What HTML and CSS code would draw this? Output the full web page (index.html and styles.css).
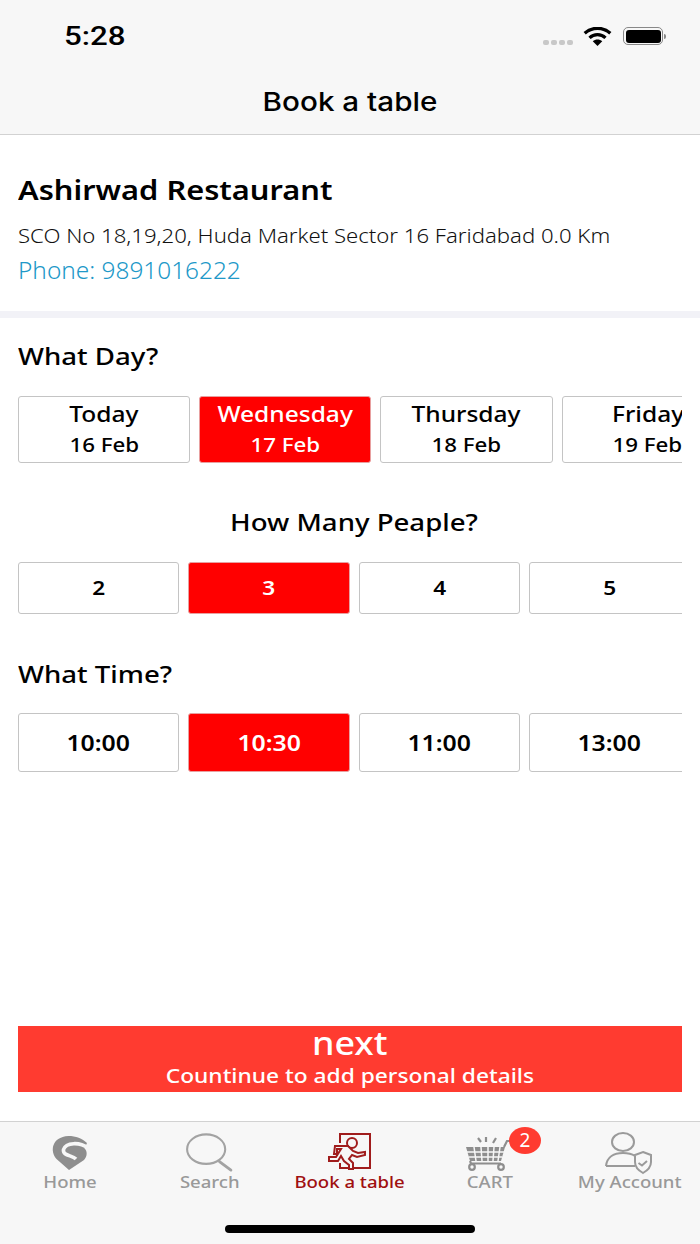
FILE: index.html
```html
<!DOCTYPE html>
<html lang="en">
<head>
<meta charset="utf-8">
<title>Book a table</title>
<link rel="stylesheet" href="styles.css">
</head>
<body>
<div class="app">
  <header class="top">
    <div class="status">
      <span class="clock">5:28</span>
      <div class="status-icons">
        <span class="dots"><i></i><i></i><i></i><i></i></span>
        <svg class="wifi" width="29" height="19" viewBox="0 0 30 20"><path d="M1.500 6.600C9-.4 21-.4 28.500 6.600" fill="none" stroke="#000" stroke-width="3.400"/><path d="M6.600 11.400c4.600-4.400 12.200-4.400 16.800 0" fill="none" stroke="#000" stroke-width="3.400"/><path d="M10 15 15 20l5-5c-2.800-2.600-7.200-2.600-10 0z" fill="#000"/></svg>
        <span class="battery"><b></b></span><span class="nub"></span>
      </div>
    </div>
    <h1 class="title">Book a table</h1>
  </header>
  <section class="info">
    <h2 class="name">Ashirwad Restaurant</h2>
    <p class="addr">SCO No 18,19,20, Huda Market Sector 16 Faridabad 0.0 Km</p>
    <p class="phone">Phone: 9891016222</p>
  </section>
  <main class="form">
    <h3 class="q q-day">What Day?</h3>
    <div class="row day-row">
      <div class="card day"><strong>Today</strong><span>16 Feb</span></div>
      <div class="card day on"><strong>Wednesday</strong><span>17 Feb</span></div>
      <div class="card day"><strong>Thursday</strong><span>18 Feb</span></div>
      <div class="card day"><strong>Friday</strong><span>19 Feb</span></div>
    </div>
    <h3 class="q q-people">How Many Peaple?</h3>
    <div class="row people-row">
      <div class="card num"><span>2</span></div>
      <div class="card num on"><span>3</span></div>
      <div class="card num"><span>4</span></div>
      <div class="card num"><span>5</span></div>
    </div>
    <h3 class="q q-time">What Time?</h3>
    <div class="row time-row">
      <div class="card time"><span>10:00</span></div>
      <div class="card time on"><span>10:30</span></div>
      <div class="card time"><span>11:00</span></div>
      <div class="card time"><span>13:00</span></div>
    </div>
    <button class="next"><span class="next-a">next</span><span class="next-b">Countinue to add personal details</span></button>
  </main>
  <nav class="tabs">
    <div class="tab">
      <svg class="ico" width="50" height="40" viewBox="0 4 50 40"><path d="M24 42 11.500 31C5 24 6 9 23.500 8c7 0 14 2.500 18.500 7l-2.500 5.500c3 2.500 3 8-.5 11.500z" fill="#8e8e8e"/><path d="M43 20C35 14 21 14 18.500 21.500 17.500 28 27 27 31 31" fill="none" stroke="#f7f7f7" stroke-width="3.600"/></svg>
      <span>Home</span>
    </div>
    <div class="tab tab-search">
      <svg class="ico" width="50" height="42" viewBox="0 0 50 42"><ellipse cx="22" cy="18" rx="20" ry="15.500" fill="none" stroke="#a3a3a3" stroke-width="2.200"/><path d="M36 31l12 9" stroke="#a3a3a3" stroke-width="3" stroke-linecap="round"/></svg>
      <span>Search</span>
    </div>
    <div class="tab active">
      <svg class="ico" width="56" height="40" viewBox="0 4 56 40" fill="none" stroke="#a01c1c" stroke-width="2"><path d="M18 15V6h30v34H18v-5"/><circle cx="30" cy="15" r="5"/><path d="M12 26 13 18H26L31 23 36 25 43 24V27L35 29 30 27 27 31 31 35V41H27V37L22 33 19 28 16 33H7V29H14L19 21H15V26Z" fill="#f7f7f7"/></svg>
      <span>Book a table</span>
    </div>
    <div class="tab tab-cart">
      <svg class="ico" width="56" height="40" viewBox="0 4 56 40" fill="none" stroke="#8e8e8e"><path d="M18 10l3 4M26 9v5M36 10l-3 5" stroke-width="2.200"/><path d="M6 19h39l-4 14H10z" fill="#8e8e8e" stroke="none"/><path d="M7 24h37M8.500 29h34M14 19l2 14M21 19l1 14M28 19v14M34 19l-1 14M40 19l-2 14" stroke="#f7f7f7" stroke-width="1.500"/><path d="M44 19l3-6h5M10 33l1 2.500h30" stroke-width="2.200"/><circle cx="12" cy="39" r="2.800" stroke-width="2.200"/><circle cx="41" cy="39" r="2.800" stroke-width="2.200"/></svg>
      <span>CART</span>
      <span class="badge">2</span>
    </div>
    <div class="tab">
      <svg class="ico" width="60" height="40" viewBox="0 4 60 40" fill="none" stroke="#9a9a9a" stroke-width="2"><ellipse cx="23" cy="14" rx="11" ry="9"/><path d="M6 38c1-9 8-13 17-13 4.500 0 9 1 12 3M6 38h29"/><path d="M43 24l8 3v7c0 5-3.500 8.500-8 11-4.500-2.500-8-6-8-11v-7z" fill="#f7f7f7"/><path d="M38.500 35l3.500 2.500 5-4.500" stroke-width="2"/></svg>
      <span>My Account</span>
    </div>
    <div class="home-bar"></div>
  </nav>
</div>
</body>
</html>
```
FILE: styles.css
```css
* { box-sizing: border-box; }
html, body { margin: 0; padding: 0; background: #fff; }
.app {
  width: 700px; height: 1244px; display: flex; flex-direction: column; overflow: hidden;
  font-family: "Noto Sans", sans-serif; color: #000;
}
.top { height: 135px; background: #f7f7f7; border-bottom: 1px solid #d2d2d2; display: flex; flex-direction: column; }
.status { height: 84px; padding: 21px 34px 0 64px; display: flex; justify-content: space-between; align-items: flex-start; }
.clock { font: 500 25px/30px Roboto, sans-serif; letter-spacing: 0; margin-top: 1px; transform: scaleX(1.25); transform-origin: left; }
.status-icons { display: flex; align-items: center; height: 30px; }
.dots { display: flex; gap: 2px; margin-top: 13px; margin-right: 10px; }
.dots i { width: 6px; height: 5px; border-radius: 2px; background: #c8c8c8; }
.wifi { margin-right: 11px; }
.battery { width: 40px; height: 18px; border: 1.500px solid #888; border-radius: 5px; padding: 1.500px; display: flex; }
.battery b { flex: 1; background: #000; border-radius: 3px; }
.nub { width: 2px; height: 5px; background: #888; margin-left: 1px; border-radius: 0 2px 2px 0; }
.title { margin: 0; text-align: center; font: 500 26px/36px Inter, sans-serif; transform: scaleX(1.14); }
.info { height: 183px; padding: 38px 18px 0; border-bottom: 7px solid #f2f2f7; }
.name, .addr, .phone, .q-day, .q-time { transform-origin: left; }
.name { margin: 0; font-weight: 600; font-size: 27px; line-height: 34px; transform: scaleX(1.14); }
.addr { margin: 16px 0 0; font-weight: 300; font-size: 20px; line-height: 26px; color: #111; transform: scaleX(1.106); }
.phone { margin: 6px 0 0; font-weight: 300; font-size: 23px; line-height: 30px; color: #2098c8; transform: scaleX(1.06); }
.form { flex: 1; padding: 0 18px; display: flex; flex-direction: column; }
.q { margin: 0; font-weight: 550; font-size: 24px; line-height: 32px; transform: scaleX(1.15); }
.q-day { margin-top: 22px; }
.q-people { margin-top: 43px; text-align: center; padding-left: 7px; }
.q-time { margin-top: 44px; }
.row { display: flex; gap: 9px; overflow: hidden; }
.day-row { margin-top: 24px; }
.people-row { margin-top: 24px; }
.time-row { margin-top: 23px; }
.card {
  flex: none; background: #fff; border: 1px solid #c4c4c4; border-radius: 3px; padding-bottom: 2px;
  display: flex; align-items: center; justify-content: center; font-weight: 600;
}
.card.on { background: #f00; color: #fff; border-color: #e8a0a0; }
.day { width: 172.200px; height: 67px; flex-direction: column; }
.day strong { font-weight: 500; font-size: 22.500px; line-height: 30px; transform: scaleX(1.09); }
.day span { font-weight: 500; font-size: 20px; line-height: 28px; margin-top: 2px; transform: scaleX(1.115); }
.num { width: 161.300px; height: 52px; font-size: 20px; }
.num span { transform: scaleX(1.13); }
.time { width: 161.300px; height: 59px; font-size: 22px; }
.time span { transform: scaleX(1.127); }
.next {
  margin-top: 254px; height: 66px; border: 0; padding: 0; background: #ff3b30; color: #fff;
  display: flex; flex-direction: column; align-items: center; font-family: inherit; flex: none;
}
.next-a { font-weight: 500; font-size: 32px; line-height: 36px; margin-top: -1px; transform: scaleX(1.12); }
.next-b { font-weight: 500; font-size: 20.500px; line-height: 28px; transform: scaleX(1.11); }
.tabs { position: relative; height: 123px; background: #f7f7f7; border-top: 1px solid #d2d2d2; display: flex; padding-top: 10px; flex: none; }
.tab { position: relative; width: 140px; display: flex; flex-direction: column; align-items: center; color: #999; font-size: 16px; font-weight: 500; }
.tab.active { color: #a01010; }
.ico { height: 40px; display: block; flex: none; overflow: visible; }
.tab-search .ico { margin-right: 2px; }
.tab-cart .ico { margin-right: 4px; }
.tab > span { line-height: 20px; transform: scaleX(1.16); }
.tab > .badge {
  position: absolute; left: 89px; top: -5px; width: 32px; height: 27px; border-radius: 50%; transform: none;
  background: #ff3b30; color: #fff; font-size: 19px; font-weight: 400; line-height: 27px; text-align: center;
}
.home-bar { position: absolute; left: 225px; top: 103px; width: 250px; height: 8px; border-radius: 4px; background: #000; }
```
